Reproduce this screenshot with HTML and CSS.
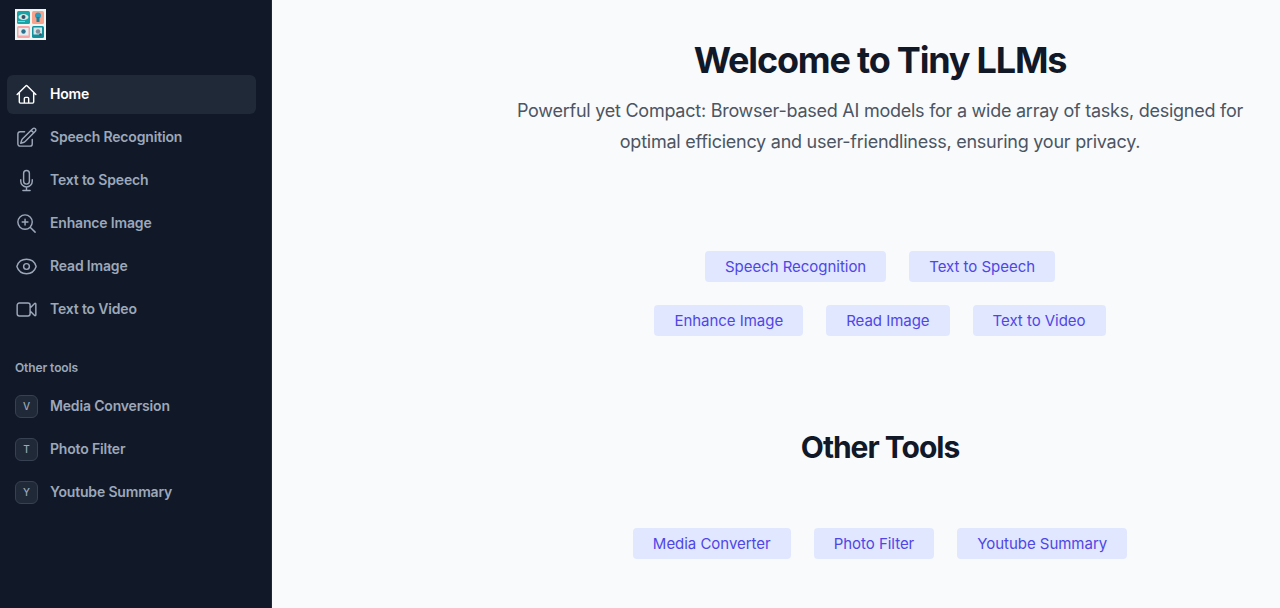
FILE: index.html
```html
<!DOCTYPE html>
<html lang="en">
<head>
  <meta charset="UTF-8" />
  <title>Tiny LLMs</title>
  <link rel="stylesheet" href="styles.css">
</head>
<body>
  <aside class="sidebar">
    <svg class="logo" viewBox="0 0 31 31" aria-label="Tiny LLMs logo">
      <rect width="31" height="31" fill="#f1f5f2"/>
      <rect x="2" y="2" width="13" height="13" rx="1.5" fill="#17a3a8"/>
      <ellipse cx="8.5" cy="8" rx="5" ry="3" fill="#d9e6de"/>
      <circle cx="8.5" cy="8" r="2" fill="#35506a"/>
      <rect x="3" y="12" width="7" height="1" fill="#7fd0c8"/>
      <rect x="17" y="2" width="12" height="13" rx="1.5" fill="#f7a48e"/>
      <circle cx="23" cy="6.5" r="3" fill="#2a9cbc"/>
      <rect x="21.5" y="8" width="3" height="5" fill="#1b7f9a"/>
      <rect x="2" y="17" width="13" height="12" rx="1.5" fill="#f6a6a8"/>
      <rect x="3.500" y="19" width="10" height="7.500" fill="#e4eef0"/>
      <circle cx="8.500" cy="22.500" r="2.200" fill="#2c6f8c"/>
      <rect x="17" y="17" width="12" height="12" rx="1.500" fill="#128f9c"/>
      <rect x="18.500" y="18.500" width="8.500" height="7" fill="#d3e3e6"/>
      <circle cx="23" cy="22.500" r="2.200" fill="#7d8c99"/>
      <circle cx="25.500" cy="25.500" r="1.300" fill="#35566e"/>
    </svg>

    <nav class="nav">
      <a class="nav-item active" href="#">
        <svg class="nav-icon" viewBox="0 0 24 24"><path d="M2.25 12l8.954-8.955a1.126 1.126 0 011.591 0L21.75 12M4.5 9.75v10.125c0 .621.504 1.125 1.125 1.125H9.75v-4.875c0-.621.504-1.125 1.125-1.125h2.25c.621 0 1.125.504 1.125 1.125V21h4.125c.621 0 1.125-.504 1.125-1.125V9.75M8.25 21h8.25"/></svg>
        Home
      </a>
      <a class="nav-item" href="#">
        <svg class="nav-icon" viewBox="0 0 24 24"><path d="M16.862 4.487l1.687-1.688a1.875 1.875 0 112.652 2.652L10.582 16.07a4.5 4.5 0 01-1.897 1.13L6 18l.8-2.685a4.5 4.5 0 011.13-1.897l8.932-8.931zm0 0L19.5 7.125M18 14v4.75A2.25 2.25 0 0115.75 21H5.25A2.25 2.25 0 013 18.75V8.25A2.25 2.25 0 015.25 6H10"/></svg>
        Speech Recognition
      </a>
      <a class="nav-item" href="#">
        <svg class="nav-icon" viewBox="0 0 24 24"><path d="M12 18.75a6 6 0 006-6v-1.5m-6 7.5a6 6 0 01-6-6v-1.5m6 7.5v3.75m-3.75 0h7.5M12 15.75a3 3 0 01-3-3V4.5a3 3 0 116 0v8.25a3 3 0 01-3 3z"/></svg>
        Text to Speech
      </a>
      <a class="nav-item" href="#">
        <svg class="nav-icon" viewBox="0 0 24 24"><path d="M21 21l-5.197-5.197m0 0A7.5 7.5 0 105.196 5.196a7.5 7.5 0 0010.607 10.607zM10.5 7.5v6m3-3h-6"/></svg>
        Enhance Image
      </a>
      <a class="nav-item" href="#">
        <svg class="nav-icon" viewBox="0 0 24 24"><path d="M2.036 12.322a1.012 1.012 0 010-.639C3.423 7.51 7.36 4.5 12 4.5c4.638 0 8.573 3.007 9.963 7.178.07.207.07.431 0 .639C20.577 16.49 16.64 19.5 12 19.5c-4.638 0-8.573-3.007-9.963-7.178z"/><path d="M15 12a3 3 0 11-6 0 3 3 0 016 0z"/></svg>
        Read Image
      </a>
      <a class="nav-item" href="#">
        <svg class="nav-icon" viewBox="0 0 24 24"><path d="M15.75 10.5l4.72-4.72a.75.75 0 011.28.53v11.38a.75.75 0 01-1.28.53l-4.72-4.72M4.5 18.75h9a2.25 2.25 0 002.25-2.25v-9a2.25 2.25 0 00-2.25-2.25h-9A2.25 2.25 0 002.25 7.5v9a2.25 2.25 0 002.25 2.25z"/></svg>
        Text to Video
      </a>
    </nav>

    <div class="nav-title">Other tools</div>

    <nav class="nav">
      <a class="nav-item" href="#"><span class="nav-badge">V</span>Media Conversion</a>
      <a class="nav-item" href="#"><span class="nav-badge">T</span>Photo Filter</a>
      <a class="nav-item" href="#"><span class="nav-badge">Y</span>Youtube Summary</a>
    </nav>
  </aside>

  <main class="main">
    <div class="content">
      <h1>Welcome to Tiny LLMs</h1>
      <p class="lead">Powerful yet Compact: Browser-based AI models for a wide array of tasks, designed for optimal efficiency and user-friendliness, ensuring your privacy.</p>

      <div class="links links-top">
        <a class="link-btn" href="#">Speech Recognition</a>
        <a class="link-btn" href="#">Text to Speech</a>
        <a class="link-btn" href="#">Enhance Image</a>
        <a class="link-btn" href="#">Read Image</a>
        <a class="link-btn" href="#">Text to Video</a>
      </div>

      <h2>Other Tools</h2>

      <div class="links links-bottom">
        <a class="link-btn" href="#">Media Converter</a>
        <a class="link-btn" href="#">Photo Filter</a>
        <a class="link-btn" href="#">Youtube Summary</a>
      </div>
    </div>
  </main>
</body>
</html>
```
FILE: styles.css
```css
* {
  box-sizing: border-box;
}
html, body {
  height: 100%;
}
body {
  margin: 0;
  display: flex;
  overflow: hidden;
  font-family: Inter, "Liberation Sans", sans-serif;
  background: #f9fafb;
}
a {
  text-decoration: none;
}

.sidebar {
  width: 272px;
  flex-shrink: 0;
  padding: 9px 15px 0 7px;
  background: #111827;
  border-right: 1px solid #1f2937;
}
.logo {
  display: block;
  width: 31px;
  height: 31px;
  margin: 0 0 35px 8px;
}
.nav {
  display: flex;
  flex-direction: column;
  gap: 4px;
}
.nav-item {
  display: flex;
  align-items: center;
  gap: 12px;
  height: 39px;
  padding: 0 8px 1px;
  border-radius: 6px;
  font-size: 14px;
  line-height: 24px;
  font-weight: 600;
  letter-spacing: -0.17px;
  color: #9ca8ba;
}
.nav-item.active {
  background: #1f2937;
  color: #fff;
}
.nav-icon {
  width: 23px;
  height: 23px;
  flex-shrink: 0;
  fill: none;
  stroke: currentColor;
  stroke-width: 1.5;
  stroke-linecap: round;
  stroke-linejoin: round;
}
.nav-title {
  margin: 27px 0 7px 8px;
  font-size: 12px;
  line-height: 24px;
  font-weight: 600;
  letter-spacing: -0.1px;
  color: #9ca8ba;
}
.nav-badge {
  display: flex;
  align-items: center;
  justify-content: center;
  width: 23px;
  height: 23px;
  flex-shrink: 0;
  border: 1px solid #374151;
  border-radius: 6px;
  background: #1f2937;
  font-size: 10px;
  font-weight: 500;
  letter-spacing: 0;
}

.main {
  flex: 1;
  padding-left: 208px;
}
.content {
  text-align: center;
}
h1 {
  margin: 36px 0 0;
  font-size: 36px;
  line-height: 48px;
  font-weight: 700;
  letter-spacing: -1.2px;
  color: #111827;
}
.lead {
  width: 740px;
  margin: 11px auto 0;
  font-size: 18px;
  line-height: 31px;
  letter-spacing: -0.25px;
  color: #4b5563;
}
.links {
  display: flex;
  flex-wrap: wrap;
  justify-content: center;
  gap: 23px;
}
.links-top {
  width: 480px;
  margin: 94px auto 0;
}
.links-bottom {
  margin-top: 63px;
}
.link-btn {
  padding: 0 20px;
  height: 31px;
  border-radius: 4px;
  background: #e0e7ff;
  color: #4f46e5;
  font-size: 15px;
  line-height: 31px;
  font-weight: 400;
  letter-spacing: -0.03px;
}
h2 {
  margin: 93px 0 0;
  font-size: 30px;
  line-height: 36px;
  font-weight: 700;
  letter-spacing: -1px;
  color: #111827;
}
```
